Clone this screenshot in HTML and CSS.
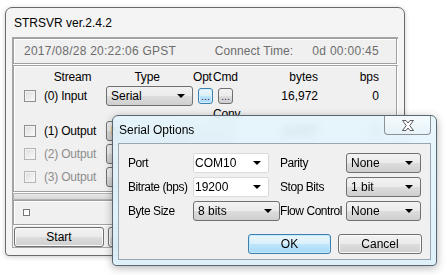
FILE: index.html
```html
<!DOCTYPE html>
<html lang="en">
<head>
  <meta charset="UTF-8" />
  <title>STRSVR ver.2.4.2</title>
  <link rel="stylesheet" href="styles.css">
</head>
<body>

  <div class="desktop">

    <!-- main window -->
    <div class="window main-win">
      <div class="titlebar">STRSVR ver.2.4.2</div>
      <div class="client">
        <div class="panel status">
          <span class="clock">2017/08/28 20:22:06 GPST</span>
          <span class="conn-label">Connect Time:</span>
          <span class="conn-time">0d 00:00:45</span>
        </div>

        <div class="panel streams">
          <div class="srow head">
            <span></span>
            <span class="c-name">Stream</span>
            <span class="c-type">Type</span>
            <span class="c-opt">Opt</span>
            <span class="c-cmd">Cmd</span>
            <span class="c-num">bytes</span>
            <span class="c-num">bps</span>
          </div>
          <div class="srow">
            <span class="check"></span>
            <span>(0) Input</span>
            <div class="combo">Serial</div>
            <button class="dots focus">...</button>
            <button class="dots">...</button>
            <span class="c-num">16,972</span>
            <span class="c-num">0</span>
          </div>
          <div class="srow conv">
            <span></span><span></span><span></span><span></span>
            <span class="c-cmd">Conv</span>
          </div>
          <div class="srow">
            <span class="check"></span>
            <span>(1) Output</span>
            <div class="combo">N</div>
            <button class="dots"></button>
            <button class="dots"></button>
            <span class="c-num">16,897</span>
            <span class="c-num">0</span>
          </div>
          <div class="srow off">
            <span class="check"></span>
            <span>(2) Output</span>
            <div class="combo"></div>
            <button class="dots"></button>
            <button class="dots"></button>
            <span></span>
            <span></span>
          </div>
          <div class="srow off">
            <span class="check"></span>
            <span>(3) Output</span>
            <div class="combo"></div>
            <button class="dots"></button>
            <button class="dots"></button>
            <span></span>
            <span></span>
          </div>
        </div>

        <div class="progress"></div>

        <div class="panel msg">
          <span class="mini-check"></span>
        </div>

        <div class="actions">
          <button class="btn">Start</button>
          <button class="btn"></button>
          <button class="btn"></button>
          <button class="btn"></button>
        </div>
      </div>
    </div>

    <!-- Serial Options dialog -->
    <div class="window dialog">
      <div class="titlebar">Serial Options</div>
      <div class="close-btn">
        <svg width="14" height="11" viewBox="0 0 14 11">
          <path d="M1.5 0.5 H5 L7 3 L9 0.5 H12.5 L8.8 5.5 L12.5 10.5 H9 L7 8 L5 10.5 H1.5 L5.2 5.5 Z"
                fill="#fff" stroke="#5b5b5b" stroke-width="1" stroke-linejoin="round"/>
        </svg>
      </div>
      <div class="dlg-body">
        <div class="form">
          <span>Port</span>
          <div class="combo edit">COM10</div>
          <span>Parity</span>
          <div class="combo">None</div>

          <span>Bitrate (bps)</span>
          <div class="combo edit">19200</div>
          <span>Stop Bits</span>
          <div class="combo">1 bit</div>

          <span>Byte Size</span>
          <div class="combo">8 bits</div>
          <span>Flow Control</span>
          <div class="combo">None</div>
        </div>
        <div class="dlg-buttons">
          <button class="btn default">OK</button>
          <button class="btn">Cancel</button>
        </div>
      </div>
    </div>

  </div>

</body>
</html>
```

FILE: styles.css
```css
body {
  margin: 0;
  background: #fff;
  font-family: 'Liberation Sans', Arial, sans-serif;
  font-size: 12px;
  color: #000;
}

.desktop {
  position: relative;
  width: 447px;
  height: 275px;
  overflow: hidden;
}

/* windows sit on a free canvas */
.window {
  position: absolute;
  box-sizing: border-box;
  display: flex;
  flex-direction: column;
}

.titlebar {
  flex: none;
  display: flex;
  align-items: center;
  white-space: nowrap;
}

/* ---------- main window ---------- */
.main-win {
  left: 5px;
  top: 7px;
  width: 400px;
  height: 249px;
  padding: 0 6px 7px 6px;
  background: #f4f4f4;
  border: 1px solid #6a6a6a;
  border-radius: 7px 7px 4px 4px;
  box-shadow: 0 1px 5px rgba(0,0,0,0.2);
}

.main-win .titlebar {
  height: 28px;
  padding-left: 2px;
  padding-top: 1px;
}

.client {
  flex: 1;
  border: 1px solid #a6a6a6;
  background: #f0f0f0;
  display: flex;
  flex-direction: column;
}

.panel {
  box-sizing: border-box;
  border: 1px solid #a0a0a0;
  box-shadow: inset 1px 1px 0 #fff, 1px 1px 0 #fff;
}

.status {
  height: 26px;
  display: flex;
  align-items: center;
  padding: 0 17px 0 10px;
  color: #6d6d6d;
}

.status .clock {
  flex: 1;
  letter-spacing: 0.25px;
}

.status .conn-label {
  margin-right: 19px;
  letter-spacing: 0.1px;
}

.status .conn-time {
  letter-spacing: 0.3px;
}

.streams {
  height: 127px;
  margin-top: 1px;
  padding-top: 1px;
}

.srow {
  display: grid;
  grid-template-columns: 30px 62px 87px 20px 20px 85px 61px;
  align-items: center;
  height: 20px;
  white-space: nowrap;
  letter-spacing: -0.2px;
}

.srow.head {
  height: 19px;
}

.srow.conv {
  height: 15px;
}

.srow + .srow:not(.conv):not(:nth-child(2)) {
  margin-top: 3px;
}

.srow.conv + .srow {
  margin-top: 0 !important;
}

.c-name, .c-type {
  text-align: center;
  padding-right: 5px;
}

.c-opt {
  text-align: right;
  padding-right: 2px;
}

.c-cmd {
  overflow: visible;
}

.c-num {
  text-align: right;
  letter-spacing: 0;
}

.srow.off {
  color: #8d8d8d;
}

.check {
  box-sizing: border-box;
  width: 12px;
  height: 12px;
  margin-left: 10px;
  border: 1px solid #8e8f8f;
  background: linear-gradient(135deg, #dcdcdc, #fbfbfb);
  box-shadow: inset 0 0 0 1px #f4f4f4;
}

.srow.off .check {
  border-color: #b5b5b5;
}

.combo {
  position: relative;
  box-sizing: border-box;
  height: 20px;
  line-height: 18px;
  padding-left: 4px;
  border: 1px solid #707070;
  border-radius: 3px;
  background: linear-gradient(#f2f2f2, #ebebeb 50%, #dddddd 51%, #cfcfcf);
  overflow: hidden;
  white-space: nowrap;
  letter-spacing: 0;
}

.combo::after {
  content: "";
  position: absolute;
  right: 7px;
  top: 7px;
  border-left: 4px solid transparent;
  border-right: 4px solid transparent;
  border-top: 4px solid #000;
}

.combo.edit {
  background: #fff;
  border: 1px solid #dadada;
  border-radius: 2px;
  padding-left: 1px;
}

.dots {
  justify-self: end;
  box-sizing: border-box;
  width: 15px;
  height: 16px;
  padding: 0;
  border: 1px solid #707070;
  border-radius: 3px;
  background: linear-gradient(#f2f2f2, #ebebeb 50%, #dddddd 51%, #cfcfcf);
  font-family: inherit;
  font-size: 11px;
  line-height: 10px;
  color: #4c2a72;
}

.dots.focus {
  border-color: #3c7fb1;
  background: linear-gradient(#eaf6fd, #d9f0fc 50%, #bee6fd 51%, #a7d9f5);
  box-shadow: inset 0 0 0 1px #d8f0fb;
}

.progress {
  box-sizing: border-box;
  height: 7px;
  margin-top: 1px;
  border: 1px solid #b2b2b2;
  background: linear-gradient(#e8e8e8, #d8d8d8);
}

.msg {
  height: 25px;
  display: flex;
  align-items: center;
  padding-left: 9px;
}

.mini-check {
  box-sizing: border-box;
  width: 7px;
  height: 7px;
  border: 1px solid #777;
  background: #fff;
}

.actions {
  display: flex;
  gap: 4px;
  margin-top: 2px;
  padding-left: 1px;
}

.btn {
  box-sizing: border-box;
  height: 20px;
  width: 90px;
  padding: 0;
  border: 1px solid #707070;
  border-radius: 3px;
  background: linear-gradient(#f2f2f2, #ebebeb 50%, #dddddd 51%, #cfcfcf);
  box-shadow: inset 0 0 0 1px #fafafa;
  font-family: inherit;
  font-size: 12px;
  color: #000;
}

/* ---------- dialog ---------- */
.dialog {
  left: 112px;
  top: 115px;
  width: 325px;
  height: 151px;
  padding: 0 5px 5px 5px;
  border: 1px solid #5d6670;
  border-radius: 6px 6px 4px 4px;
  background: linear-gradient(rgba(228,246,253,0.85), rgba(216,239,250,0.85));
  backdrop-filter: blur(5px);
  box-shadow: 0 2px 8px rgba(0,0,0,0.3);
}

.dialog .titlebar {
  height: 27px;
  padding-left: 1px;
}

.close-btn {
  position: absolute;
  top: 0;
  right: 5px;
  box-sizing: border-box;
  width: 47px;
  height: 19px;
  border: 1px solid #8c9198;
  border-top: none;
  border-radius: 0 0 4px 4px;
  background: linear-gradient(rgba(255,255,255,0.55), rgba(230,240,246,0.5));
  display: flex;
  align-items: center;
  justify-content: center;
}

.dlg-body {
  flex: 1;
  border: 1px solid #9aa6b1;
  background: #f0f0f0;
  padding: 9px 8px 0 9px;
}

.form {
  display: grid;
  grid-template-columns: 65px 87px 66px 75px;
  grid-auto-rows: 20px;
  row-gap: 4px;
  align-items: center;
  white-space: nowrap;
}

.form > span {
  letter-spacing: -0.45px;
}

.form .combo.edit {
  width: 76px;
}

.dlg-buttons {
  display: flex;
  justify-content: flex-end;
  gap: 7px;
  margin-top: 13px;
}

.dlg-buttons .btn {
  width: 84px;
}

.btn.default {
  width: 83px;
  border-color: #3c7fb1;
  background: linear-gradient(#eaf6fd, #d9f0fc 50%, #bee6fd 51%, #a7d9f5);
  box-shadow: inset 0 0 0 1px #c6e9fb;
}
```
